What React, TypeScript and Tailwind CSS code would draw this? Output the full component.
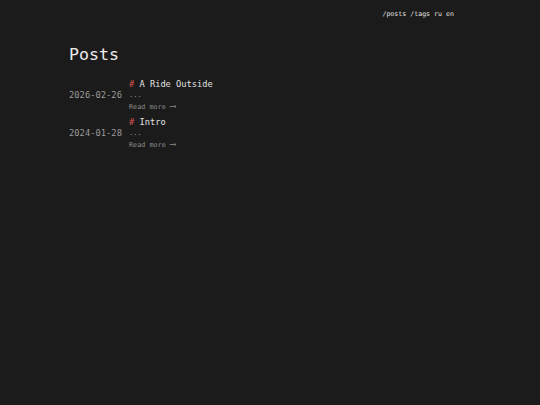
const posts = [
  { date: "2026-02-26", title: "A Ride Outside" },
  { date: "2024-01-28", title: "Intro" },
]

export default function App() {
  return (
    <div
      className="min-h-screen bg-[#1b1b1b] text-[#e4e4e4]"
      style={{ fontFamily: '"DejaVu Sans Mono", "Liberation Mono", monospace' }}
    >
      <div className="pl-[69px] pr-[86px]">
        <nav className="flex justify-end gap-[4px] pt-[9px] text-[6.6px] leading-[10px] text-[#e0e0e0]">
          <a>/posts</a>
          <a>/tags</a>
          <a>ru</a>
          <a>en</a>
        </nav>
        <h1 className="mt-[26px] text-[16.6px] leading-[20px] text-[#ececec]">Posts</h1>
        <ul className="mt-[13px] flex flex-col gap-[3px]">
          {posts.map((p) => (
            <li key={p.date} className="flex items-center gap-[7px]">
              <span className="w-[53px] text-[8.8px] text-[#9a9a9a]">{p.date}</span>
              <div className="flex flex-col">
                <span className="text-[8.7px] leading-[12px] text-[#e2e2e2]">
                  <span className="text-[#d9534f]">#</span> {p.title}
                </span>
                <span className="text-[7px] leading-[11px] text-[#9a9a9a]">...</span>
                <span className="text-[6.8px] leading-[11px] text-[#8a8a8a]">
                  Read more <span className="text-[9px]">⟶</span>
                </span>
              </div>
            </li>
          ))}
        </ul>
      </div>
    </div>
  )
}
